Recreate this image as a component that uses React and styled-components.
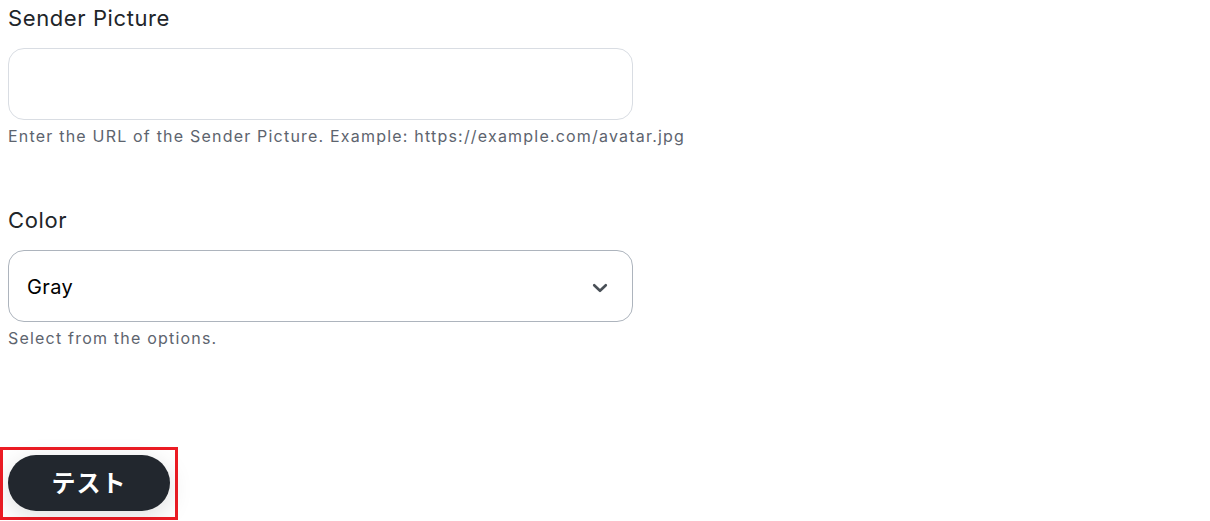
import React from "react";
import styled, { createGlobalStyle } from "styled-components";

const Global = createGlobalStyle`
  html, body { margin: 0; padding: 0; background: #fff; }
  body { font-family: Inter, "Noto Sans CJK JP", sans-serif; }
`;

const Page = styled.div`
  padding: 4px 8px 0;
  width: 625px;
  display: flex;
  flex-direction: column;
`;

const Field = styled.div`
  display: flex;
  flex-direction: column;
  margin-bottom: ${(p) => p.$mb || 0}px;
`;

const Label = styled.label`
  font-size: 22px;
  line-height: 28px;
  color: #212529;
  margin-bottom: 16px;
  letter-spacing: 0.6px;
`;

const Input = styled.input`
  box-sizing: border-box;
  width: 625px;
  height: 72px;
  border: 1px solid #d9dde3;
  border-radius: 16px;
  background: #fff;
  outline: none;
  font: inherit;
`;

const SelectBox = styled.div`
  box-sizing: border-box;
  width: 625px;
  height: 72px;
  border: 1px solid #adb4bd;
  border-radius: 16px;
  display: flex;
  align-items: center;
  justify-content: space-between;
  padding: 1px 24px 0 18px;
  font-size: 20px;
  letter-spacing: 0.4px;
  color: #000;
`;

const Chevron = styled.svg`
  display: block;
  margin-top: 2px;
`;

const Help = styled.div`
  margin-top: 6px;
  font-size: 16px;
  line-height: 20px;
  color: #5d646e;
  letter-spacing: 1.2px;
  white-space: nowrap;
`;

const Highlight = styled.div`
  margin-top: 99px;
  margin-left: -8px;
  align-self: flex-start;
  display: flex;
  padding: 5px 5px 6px;
  border: 3px solid #ec1c24;
`;

const Button = styled.button`
  width: 162px;
  height: 56px;
  padding: 0 0 3px;
  border: none;
  border-radius: 999px;
  background: #22272e;
  color: #fff;
  font-family: "Noto Sans CJK JP", sans-serif;
  font-weight: 700;
  font-size: 24px;
  letter-spacing: 1px;
  box-shadow: 0 6px 24px rgba(0, 0, 0, 0.13);
  cursor: pointer;
`;

export default function App() {
  return (
    <>
      <Global />
      <Page>
        <Field $mb={60}>
          <Label>Sender Picture</Label>
          <Input />
          <Help>Enter the URL of the Sender Picture. Example: https://example.com/avatar.jpg</Help>
        </Field>
        <Field>
          <Label>Color</Label>
          <SelectBox>
            <span>Gray</span>
            <Chevron width="16" height="10" viewBox="0 0 16 10" fill="none" stroke="#495057" strokeWidth="2.6" strokeLinecap="round" strokeLinejoin="round">
              <path d="M2.2 2.2l5.8 5.6 5.8-5.6" />
            </Chevron>
          </SelectBox>
          <Help>Select from the options.</Help>
        </Field>
        <Highlight>
          <Button>テスト</Button>
        </Highlight>
      </Page>
    </>
  );
}
